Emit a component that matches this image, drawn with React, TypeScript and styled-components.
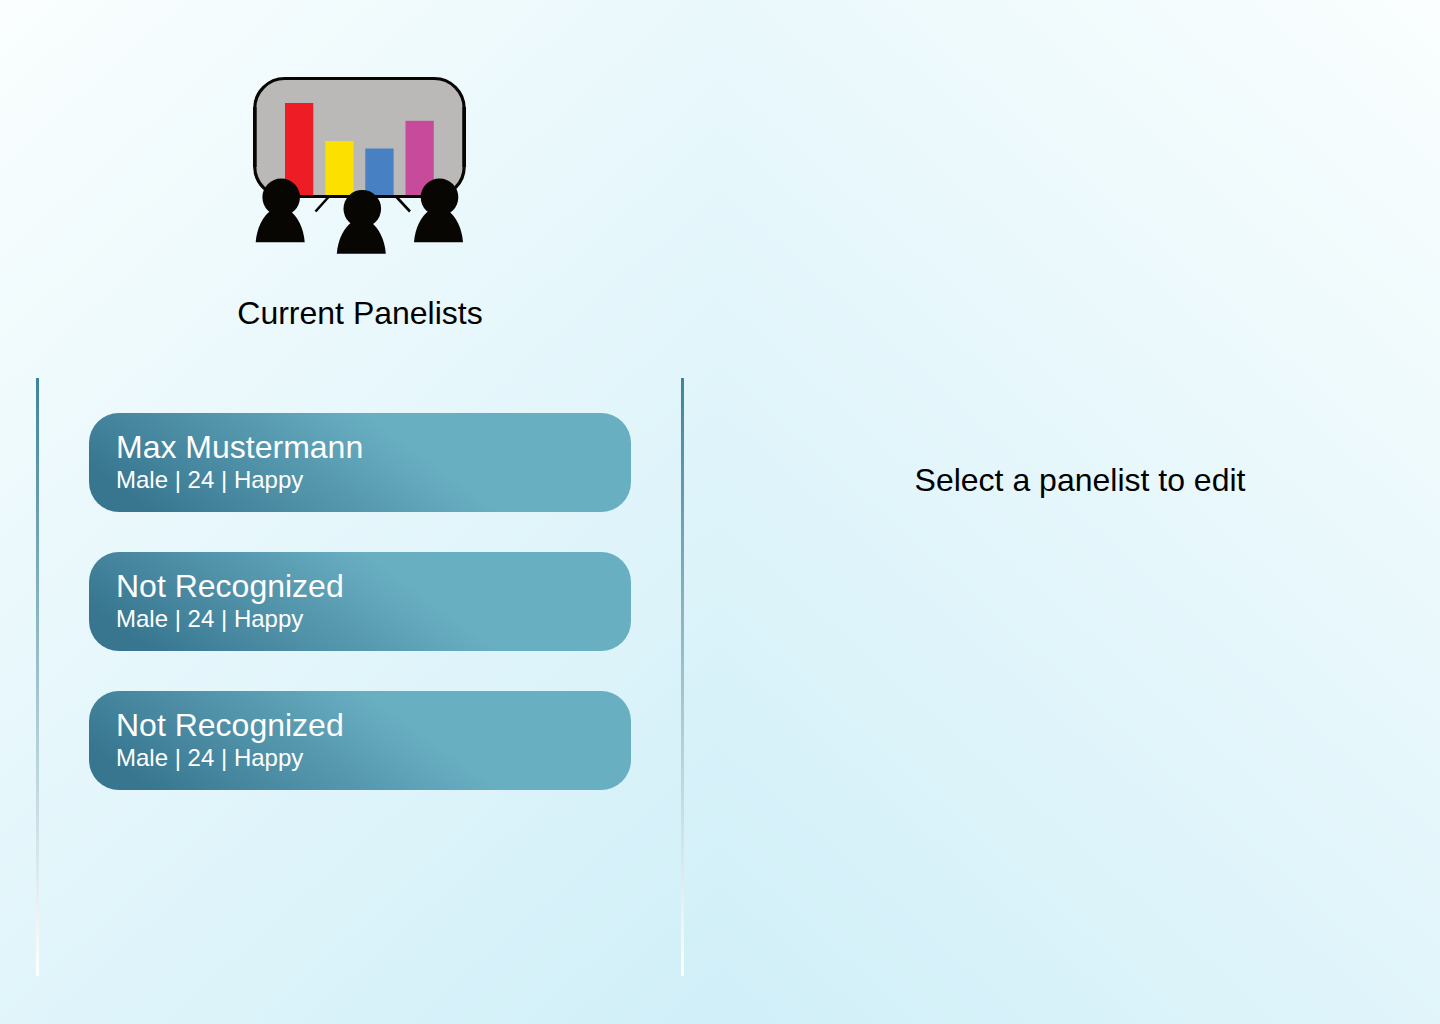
import React from "react";
import styled, { createGlobalStyle } from "styled-components";

const GlobalStyle = createGlobalStyle`
  * { box-sizing: border-box; }
  body {
    margin: 0;
    font-family: "Helvetica Neue", "Liberation Sans", Arial, sans-serif;
    color: #000;
  }
`;

const Page = styled.main`
  display: grid;
  grid-template-columns: 1fr 1fr;
  min-height: 100vh;
`;

const Half = styled.section<{ $angle: number }>`
  display: flex;
  flex-direction: column;
  align-items: center;
  background: linear-gradient(${(p) => p.$angle}deg, #fafefe, #d0eff8);
`;

const PanelistHalf = styled(Half)`
  padding: 76px 36px 48px;
`;

const EditorHalf = styled(Half)`
  padding: 460px 36px 48px;
`;

const Logo = styled.svg`
  display: block;
  width: 216px;
  height: 180px;
`;

const Title = styled.h1`
  margin: 37px 0 45px;
  font-size: 32px;
  line-height: 40px;
  font-weight: 400;
`;

const Prompt = styled.p`
  margin: 0;
  font-size: 32px;
  line-height: 40px;
`;

const ListFrame = styled.div`
  display: flex;
  flex: 1;
  align-self: stretch;
`;

const Rule = styled.div`
  width: 3px;
  background: linear-gradient(#3e849a, #ffffff);
`;

const PanelistList = styled.ul`
  display: flex;
  flex: 1;
  flex-direction: column;
  gap: 40px;
  margin: 0;
  padding: 35px 50px;
  list-style: none;
`;

const PanelistCard = styled.button`
  display: block;
  width: 100%;
  padding: 16px 27px 17px;
  border: 0;
  border-radius: 30px;
  background: linear-gradient(36deg, #387690 9%, #69afc2 61%);
  color: #fff;
  font-family: inherit;
  text-align: left;
  cursor: pointer;
`;

const Name = styled.span`
  display: block;
  font-size: 32px;
  line-height: 36px;
`;

const Details = styled.span`
  display: block;
  font-size: 24px;
  line-height: 30px;
`;

const panelists = [
  { id: 1, name: "Max Mustermann", gender: "Male", age: 24, mood: "Happy" },
  { id: 2, name: "Not Recognized", gender: "Male", age: 24, mood: "Happy" },
  { id: 3, name: "Not Recognized", gender: "Male", age: 24, mood: "Happy" },
];

function Viewer({ x, y }: { x: number; y: number }) {
  return (
    <g transform={`translate(${x} ${y})`} fill="#070603">
      <circle cx="25.5" cy="19" r="18.8" />
      <path d="M0 64C1 50 7 38 15.500 32H33.500C42 38 48 50 49 64Z" />
    </g>
  );
}

function AudienceLogo() {
  return (
    <Logo viewBox="0 0 216 180" role="img" aria-label="Audience in front of a chart">
      <rect x="2.700" y="2.500" width="209.500" height="118" rx="30" fill="#bab9b7" stroke="#070603" strokeWidth="3.200" />
      <path d="M2.800 31V91M212.200 31V91" stroke="#070603" strokeWidth="3.600" />
      <rect x="33" y="27" width="28.300" height="92" fill="#ee1c25" />
      <rect x="73.300" y="65" width="28.300" height="54" fill="#fce000" />
      <rect x="113.300" y="72.500" width="28.300" height="46.500" fill="#4881c3" />
      <rect x="153.500" y="44.800" width="28.300" height="74.200" fill="#c84b9b" />
      <path d="M76.500 121L63.500 135.500M144.500 121L158 135.500" stroke="#070603" strokeWidth="2.600" />
      <Viewer x={3.700} y={102.3} />
      <Viewer x={162} y={102.3} />
      <Viewer x={84.800} y={113.700} />
    </Logo>
  );
}

export default function App() {
  return (
    <>
      <GlobalStyle />
      <Page>
        <PanelistHalf $angle={138}>
          <AudienceLogo />
          <Title>Current Panelists</Title>
          <ListFrame>
            <Rule />
            <PanelistList>
              {panelists.map((p) => (
                <li key={p.id}>
                  <PanelistCard type="button">
                    <Name>{p.name}</Name>
                    <Details>
                      {p.gender} | {p.age} | {p.mood}
                    </Details>
                  </PanelistCard>
                </li>
              ))}
            </PanelistList>
            <Rule />
          </ListFrame>
        </PanelistHalf>
        <EditorHalf $angle={222}>
          <Prompt>Select a panelist to edit</Prompt>
        </EditorHalf>
      </Page>
    </>
  );
}
